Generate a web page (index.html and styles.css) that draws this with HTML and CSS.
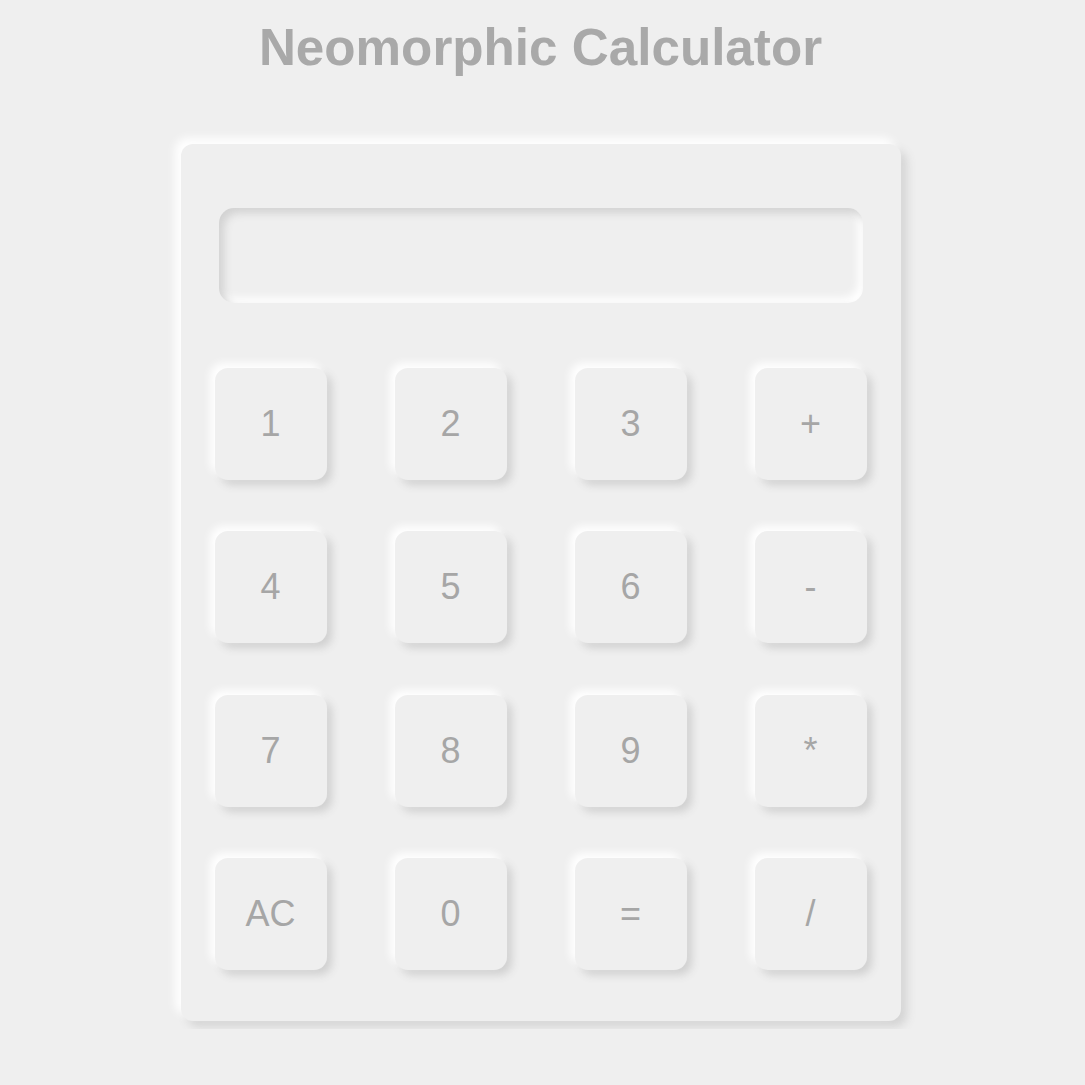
FILE: index.html
```html
<!DOCTYPE html>
<html lang="en">
<head>
<meta charset="utf-8">
<title>Neomorphic Calculator</title>
<link rel="stylesheet" href="styles.css">
</head>
<body>
<h1 class="title">Neomorphic Calculator</h1>
<div class="calculator">
  <div class="display"></div>
  <div class="keys">
    <button class="key">1</button>
    <button class="key">2</button>
    <button class="key">3</button>
    <button class="key">+</button>
    <button class="key">4</button>
    <button class="key">5</button>
    <button class="key">6</button>
    <button class="key">-</button>
    <button class="key">7</button>
    <button class="key">8</button>
    <button class="key">9</button>
    <button class="key">*</button>
    <button class="key">AC</button>
    <button class="key">0</button>
    <button class="key">=</button>
    <button class="key">/</button>
  </div>
</div>
</body>
</html>
```
FILE: styles.css
```css
html, body {
  margin: 0;
  padding: 0;
  background: #efefef;
}
body {
  padding: 8px 11px 8px 7px;
  font-family: "Liberation Sans", Arial, sans-serif;
}
.title {
  margin: 10px 0 0;
  font-size: 51.2px;
  font-weight: bold;
  text-align: center;
  color: #a9a9a9;
  line-height: normal;
}
.calculator {
  width: 720px;
  margin: 67px auto 0;
  box-sizing: border-box;
  padding: 64px 0 51px;
  background: #efefef;
  border-radius: 12px;
  box-shadow: -6px -6px 10px #ffffff, 6px 6px 10px #d4d4d4;
}
.display {
  height: 95px;
  margin: 0 38px;
  border-radius: 15px;
  background: #efefef;
  box-shadow: inset 5px 5px 8px #d2d2d2, inset -5px -5px 8px #ffffff;
}
.keys {
  margin-top: 65px;
  display: grid;
  grid-template-columns: repeat(4, 1fr);
  row-gap: 51.33px;
  justify-items: center;
}
.key {
  width: 112px;
  height: 112px;
  border: none;
  border-radius: 13px;
  background: #efefef;
  color: #a6a6a6;
  font-family: "Liberation Sans", Arial, sans-serif;
  font-size: 36px;
  padding: 0;
  box-shadow: -5px -5px 8px #ffffff, 5px 5px 8px #d0d0d0;
}
```
